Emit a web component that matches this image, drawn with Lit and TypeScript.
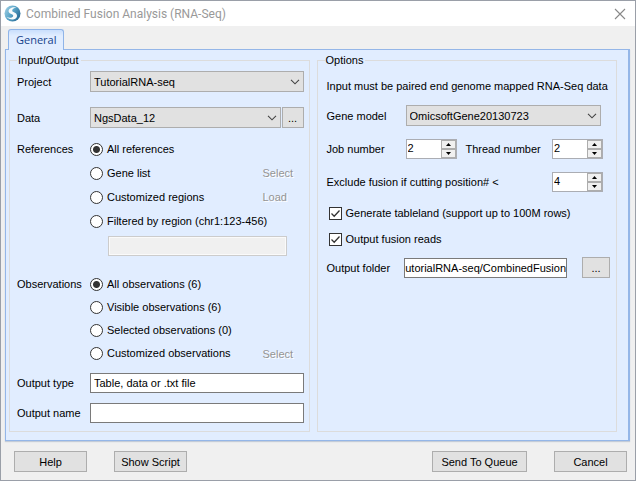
import { LitElement, html, css, svg } from "lit";
import { customElement, property } from "lit/decorators.js";

const chevron = html`<svg class="chevron" width="10" height="6" viewBox="0 0 10 6" aria-hidden="true">
  <path d="M1 0.8 L5 4.8 L9 0.8" fill="none" stroke="#444" stroke-width="1.1" />
</svg>`;

const textFont = css`
  * {
    box-sizing: border-box;
  }
  input,
  select,
  button {
    margin: 0;
    font: inherit;
    color: inherit;
    border-radius: 0;
  }
`;

@customElement("number-box")
export class NumberBox extends LitElement {
  @property() label = "";
  @property({ type: Number }) value = 0;

  static styles = [
    textFont,
    css`
      :host {
        display: block;
        width: 51px;
        height: 20px;
      }
      .box {
        display: flex;
        height: 100%;
        border: 1px solid #abadb3;
        background: #fff;
      }
      .value {
        flex: 1;
        min-width: 0;
        padding: 0 0 2px 1px;
        border: 0;
        background: none;
        outline: none;
        appearance: textfield;
      }
      .value::-webkit-inner-spin-button {
        display: none;
      }
      .steps {
        display: flex;
        flex-direction: column;
        width: 15px;
      }
      .step {
        flex: 1;
        display: flex;
        align-items: center;
        justify-content: center;
        min-height: 0;
        padding: 0;
        border: 1px solid #adadad;
        background: #f0f0f0;
      }
    `,
  ];

  private step(by: number) {
    this.value += by;
  }

  render() {
    return html`<div class="box">
      <input class="value" type="number" aria-label=${this.label} .value=${String(this.value)} />
      <div class="steps">
        <button class="step" aria-label="Increase" @click=${() => this.step(1)}>
          <svg width="5" height="3" viewBox="0 0 5 3"><path d="M0 3 L2.5 0 L5 3Z" /></svg>
        </button>
        <button class="step" aria-label="Decrease" @click=${() => this.step(-1)}>
          <svg width="5" height="3" viewBox="0 0 5 3"><path d="M0 0 L2.5 3 L5 0Z" /></svg>
        </button>
      </div>
    </div>`;
  }
}

@customElement("app-root")
export class AppRoot extends LitElement {
  static styles = [
    textFont,
    css`
      :host {
        display: block;
        font: 11px/16px "Liberation Sans", Arial, sans-serif;
        color: #000;
      }
      .window {
        display: flex;
        flex-direction: column;
        min-height: 100vh;
        border: 1px solid #9a9fa8;
        background: #f0f0f0;
      }
      .titlebar {
        display: flex;
        align-items: center;
        height: 25px;
        padding: 0 9px 0 3px;
        background: #fff;
      }
      .title {
        flex: 1;
        margin: 0 0 0 5px;
        font: 12px/16px Roboto, "Open Sans", sans-serif;
        color: #999;
      }
      .close {
        display: flex;
        padding: 0;
        border: 0;
        background: none;
      }
      .tabs {
        display: flex;
        padding: 3px 7px 0;
      }
      .tab {
        position: relative;
        z-index: 1;
        height: 21px;
        margin-bottom: -1px;
        padding: 0 7px;
        border: 1px solid #8fb4e8;
        border-bottom: 0;
        border-radius: 3px 3px 0 0;
        background: linear-gradient(#c9defc, #e1edff 6px);
        font-family: "Open Sans", "Noto Sans", sans-serif;
        color: #15428b;
      }
      .panel {
        flex: 1;
        display: grid;
        grid-template-columns: 1fr 1fr;
        gap: 7px;
        margin: 0 5px 0 4px;
        padding: 3px 11px 8px 3px;
        border: 1px solid #94b6e8;
        border-right-width: 2px;
        box-shadow: 0 1px 1px #c4ccd8;
        background: #e1edff;
      }
      .group {
        min-width: 0;
        margin: 0;
        padding: 4px 5px 8px 7px;
        border: 1px solid #dcdcdc;
      }
      .options {
        padding-left: 9px;
        padding-right: 6px;
      }
      .legend {
        height: 14px;
        padding: 0 2px 0 1px;
        line-height: 14px;
      }
      .options .legend {
        margin-left: -2px;
      }
      .row {
        display: flex;
        align-items: center;
      }
      .label {
        flex: none;
        width: 73px;
      }
      .options .label {
        width: 79px;
      }
      .gap {
        margin-bottom: 15px;
      }
      .select {
        position: relative;
        flex: 1;
        height: 21px;
      }
      .select select {
        width: 100%;
        height: 100%;
        padding: 0 20px 0 3px;
        border: 1px solid #adadad;
        background: #e1e1e1;
        appearance: none;
      }
      .chevron {
        position: absolute;
        right: 4px;
        top: 8px;
        pointer-events: none;
      }
      .btn {
        height: 21px;
        padding: 0;
        border: 1px solid #adadad;
        background: #e1e1e1;
        text-align: center;
      }
      .more {
        width: 22px;
        margin-left: 1px;
      }
      .choices {
        display: flex;
        align-items: flex-start;
      }
      .list {
        flex: 1;
      }
      .references {
        line-height: 24px;
        margin-top: 9px;
      }
      .observations {
        line-height: 23px;
        margin: 17px 0 8px;
      }
      .choice {
        display: flex;
        align-items: center;
      }
      .choice label {
        flex: 1;
        display: flex;
        align-items: center;
        gap: 4px;
      }
      .radio {
        flex: none;
        width: 13px;
        height: 13px;
        border: 1px solid #333;
        border-radius: 50%;
        background: #fff;
        appearance: none;
      }
      .radio:checked {
        background: radial-gradient(circle, #333 3px, #fff 4px);
      }
      .link {
        width: 41px;
        padding: 0;
        border: 0;
        background: none;
        text-align: left;
        line-height: 16px;
        color: #949494;
        text-shadow: 1px 1px #fff;
      }
      .text {
        height: 20px;
        padding: 0 3px;
        border: 1px solid #7a7a7a;
        background: #fff;
        min-width: 0;
        flex: 1;
      }
      .region {
        display: block;
        width: calc(100% - 35px);
        margin: 3px 17px 0 18px;
        border: 1px solid #ccc;
        background: #f0f0f0;
        box-shadow: inset 0 0 0 1px #fafafa;
      }
      .small-gap {
        margin-bottom: 10px;
      }
      .note {
        margin: 7px 0 11px;
        white-space: nowrap;
      }
      .spaced {
        margin-bottom: 13px;
      }
      .model {
        padding-right: 9px;
      }
      .numbers {
        padding-right: 7px;
      }
      .push {
        margin-left: auto;
      }
      .thread {
        margin: 0 auto 0 9px;
      }
      .check {
        display: flex;
        align-items: center;
        gap: 4px;
        margin: 0 0 10px 2px;
      }
      .tick {
        position: relative;
        display: grid;
        width: 13px;
        height: 13px;
      }
      .tick input {
        width: 13px;
        height: 13px;
        border: 1px solid #333;
        background: #fff;
        appearance: none;
      }
      .tick svg {
        position: absolute;
        inset: 0;
        pointer-events: none;
      }
      .tick input:not(:checked) + svg {
        display: none;
      }
      .options .folder .label {
        width: 77px;
      }
      .folder .text {
        padding: 0;
        text-align: right;
      }
      .browse {
        width: 28px;
        margin-left: 15px;
      }
      .footer {
        display: flex;
        gap: 27px;
        padding: 10px 8px 8px 13px;
      }
      .footer .btn {
        width: 73px;
      }
      .footer .wide {
        width: 95px;
        margin-left: auto;
      }
    `,
  ];

  private choice(group: string, text: string, checked = false, action = "") {
    return html`<div class="choice">
      <label><input class="radio" type="radio" name=${group} .checked=${checked} />${text}</label>
      ${action ? html`<button class="link" disabled>${action}</button>` : ""}
    </div>`;
  }

  private check(text: string) {
    return html`<label class="check">
      <span class="tick">
        <input type="checkbox" checked />
        <svg width="13" height="13" viewBox="0 0 13 13">
          <path d="M2.5 6.5 L5.2 9.2 L10.5 3.5" fill="none" stroke="#333" stroke-width="1.3" />
        </svg>
      </span>
      ${text}
    </label>`;
  }

  private logo() {
    return svg`<svg width="17" height="17" viewBox="0 0 17 17" aria-hidden="true">
      <defs>
        <linearGradient id="ball" x1="0" y1="0" x2="1" y2="0.6">
          <stop offset="0" stop-color="#a9d3e6" />
          <stop offset="0.5" stop-color="#5fa9cb" />
          <stop offset="1" stop-color="#2a6f9a" />
        </linearGradient>
      </defs>
      <circle cx="8.5" cy="8.5" r="8" fill="url(#ball)" />
      <path d="M12.6 2.6 C8.8 1.4 4.4 3.4 4.6 6.4 C4.9 9 9.6 8.8 9.2 10.9 C8.8 12.8 5.6 13.2 2.6 12 C6.2 16 13.2 14.8 13 10.4 C12.8 7 8 7.4 8.2 5.4 C8.4 3.8 10.4 2.9 12.6 2.6Z" fill="#f8fbfc" />
    </svg>`;
  }

  render() {
    return html`<main class="window">
      <header class="titlebar">
        ${this.logo()}
        <h1 class="title">Combined Fusion Analysis (RNA-Seq)</h1>
        <button class="close" aria-label="Close">
          <svg width="12" height="12" viewBox="0 0 12 12">
            <path d="M1 1 L11 11 M11 1 L1 11" stroke="#888" stroke-width="1.1" />
          </svg>
        </button>
      </header>
      <nav class="tabs"><button class="tab">General</button></nav>
      <section class="panel">
        <fieldset class="group">
          <legend class="legend">Input/Output</legend>
          <div class="row gap">
            <label class="label" for="project">Project</label>
            <div class="select">
              <select id="project"><option>TutorialRNA-seq</option></select>${chevron}
            </div>
          </div>
          <div class="row">
            <label class="label" for="data">Data</label>
            <div class="select">
              <select id="data"><option>NgsData_12</option></select>${chevron}
            </div>
            <button class="btn more">...</button>
          </div>
          <div class="choices references">
            <span class="label">References</span>
            <div class="list">
              ${this.choice("references", "All references", true)}
              ${this.choice("references", "Gene list", false, "Select")}
              ${this.choice("references", "Customized regions", false, "Load")}
              ${this.choice("references", "Filtered by region (chr1:123-456)")}
              <input class="text region" type="text" aria-label="Region" disabled />
            </div>
          </div>
          <div class="choices observations">
            <span class="label">Observations</span>
            <div class="list">
              ${this.choice("observations", "All observations (6)", true)}
              ${this.choice("observations", "Visible observations (6)")}
              ${this.choice("observations", "Selected observations (0)")}
              ${this.choice("observations", "Customized observations", false, "Select")}
            </div>
          </div>
          <div class="row small-gap">
            <label class="label" for="type">Output type</label>
            <input class="text" id="type" type="text" value="Table, data or .txt file" />
          </div>
          <div class="row">
            <label class="label" for="name">Output name</label>
            <input class="text" id="name" type="text" />
          </div>
        </fieldset>
        <fieldset class="group options">
          <legend class="legend">Options</legend>
          <p class="note">Input must be paired end genome mapped RNA-Seq data</p>
          <div class="row spaced model">
            <label class="label" for="model">Gene model</label>
            <div class="select">
              <select id="model"><option>OmicsoftGene20130723</option></select>${chevron}
            </div>
          </div>
          <div class="row spaced numbers">
            <span class="label">Job number</span>
            <number-box label="Job number" value="2"></number-box>
            <span class="thread">Thread number</span>
            <number-box label="Thread number" value="2"></number-box>
          </div>
          <div class="row spaced numbers">
            <span>Exclude fusion if cutting position# &lt;</span>
            <number-box class="push" label="Exclude fusion if cutting position# &lt;" value="4"></number-box>
          </div>
          ${this.check("Generate tableland (support up to 100M rows)")}
          ${this.check("Output fusion reads")}
          <div class="row folder">
            <label class="label" for="folder">Output folder</label>
            <input class="text" id="folder" type="text" value="utorialRNA-seq/CombinedFusion" />
            <button class="btn browse">...</button>
          </div>
        </fieldset>
      </section>
      <footer class="footer">
        <button class="btn">Help</button>
        <button class="btn">Show Script</button>
        <button class="btn wide">Send To Queue</button>
        <button class="btn">Cancel</button>
      </footer>
    </main>`;
  }
}
